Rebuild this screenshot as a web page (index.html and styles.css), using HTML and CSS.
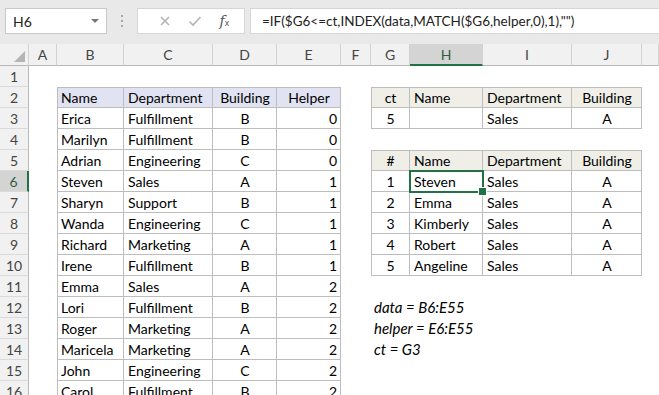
FILE: index.html
```html
<!DOCTYPE html>
<html lang="en">
<head>
  <meta charset="UTF-8">
  <title>Sheet</title>
  <link rel="stylesheet" href="styles.css">
</head>
<body>
<div class="app">
  <div class="fbar">
    <div class="namebox"><span>H6</span><span class="caret"></span></div>
    <div class="grip"><i></i><i></i><i></i></div>
    <div class="btns">
      <svg class="ico" width="12" height="12" viewBox="0 0 12 12"><path d="M2 2 L10 10 M10 2 L2 10" stroke="#b4b4b4" stroke-width="1.6" fill="none"/></svg>
      <svg class="ico" width="14" height="12" viewBox="0 0 14 12"><path d="M1.5 6.5 L5 10 L12.5 2" stroke="#b4b4b4" stroke-width="1.6" fill="none"/></svg>
      <span class="fx"><i>f</i><span>x</span></span>
    </div>
    <div class="formula">=IF($G6&lt;=ct,INDEX(data,MATCH($G6,helper,0),1),"")</div>
  </div>

  <div class="sheet">
    <div class="ch corner"></div>
    <div class="ch">A</div>
    <div class="ch">B</div>
    <div class="ch">C</div>
    <div class="ch">D</div>
    <div class="ch">E</div>
    <div class="ch">F</div>
    <div class="ch">G</div>
    <div class="ch on">H</div>
    <div class="ch">I</div>
    <div class="ch">J</div>
    <div class="ch"></div>

    <div class="rh">1</div>
    <div class="rh">2</div>
    <div class="rh">3</div>
    <div class="rh">4</div>
    <div class="rh">5</div>
    <div class="rh on">6</div>
    <div class="rh">7</div>
    <div class="rh">8</div>
    <div class="rh">9</div>
    <div class="rh">10</div>
    <div class="rh">11</div>
    <div class="rh">12</div>
    <div class="rh">13</div>
    <div class="rh">14</div>
    <div class="rh">15</div>
    <div class="rh">16</div>

    <!-- data table B2:E16 -->
    <div class="tbl data">
      <div class="hd l">Name</div><div class="hd l">Department</div><div class="hd c">Building</div><div class="hd c">Helper</div>
      <div class="l">Erica</div><div class="l">Fulfillment</div><div class="c">B</div><div class="r">0</div>
      <div class="l">Marilyn</div><div class="l">Fulfillment</div><div class="c">B</div><div class="r">0</div>
      <div class="l">Adrian</div><div class="l">Engineering</div><div class="c">C</div><div class="r">0</div>
      <div class="l">Steven</div><div class="l">Sales</div><div class="c">A</div><div class="r">1</div>
      <div class="l">Sharyn</div><div class="l">Support</div><div class="c">B</div><div class="r">1</div>
      <div class="l">Wanda</div><div class="l">Engineering</div><div class="c">C</div><div class="r">1</div>
      <div class="l">Richard</div><div class="l">Marketing</div><div class="c">A</div><div class="r">1</div>
      <div class="l">Irene</div><div class="l">Fulfillment</div><div class="c">B</div><div class="r">1</div>
      <div class="l">Emma</div><div class="l">Sales</div><div class="c">A</div><div class="r">2</div>
      <div class="l">Lori</div><div class="l">Fulfillment</div><div class="c">B</div><div class="r">2</div>
      <div class="l">Roger</div><div class="l">Marketing</div><div class="c">A</div><div class="r">2</div>
      <div class="l">Maricela</div><div class="l">Marketing</div><div class="c">A</div><div class="r">2</div>
      <div class="l">John</div><div class="l">Engineering</div><div class="c">C</div><div class="r">2</div>
      <div class="l">Carol</div><div class="l">Fulfillment</div><div class="c">B</div><div class="r">2</div>
    </div>

    <!-- criteria G2:J3 -->
    <div class="tbl crit">
      <div class="hd c">ct</div><div class="hd l">Name</div><div class="hd l">Department</div><div class="hd c">Building</div>
      <div class="c">5</div><div class="l"></div><div class="l">Sales</div><div class="c">A</div>
    </div>

    <!-- results G5:J10 -->
    <div class="tbl res">
      <div class="hd c">#</div><div class="hd l">Name</div><div class="hd l">Department</div><div class="hd c">Building</div>
      <div class="c">1</div><div class="l sel">Steven</div><div class="l">Sales</div><div class="c">A</div>
      <div class="c">2</div><div class="l">Emma</div><div class="l">Sales</div><div class="c">A</div>
      <div class="c">3</div><div class="l">Kimberly</div><div class="l">Sales</div><div class="c">A</div>
      <div class="c">4</div><div class="l">Robert</div><div class="l">Sales</div><div class="c">A</div>
      <div class="c">5</div><div class="l">Angeline</div><div class="l">Sales</div><div class="c">A</div>
    </div>

    <div class="notes">
      <div>data = B6:E55</div>
      <div>helper = E6:E55</div>
      <div>ct = G3</div>
    </div>
  </div>
</div>
</body>
</html>
```

FILE: styles.css
```css
* {
  box-sizing: border-box;
}

body {
  margin: 0;
  background: #fff;
  color: #000;
  font-family: Lato, "Open Sans", sans-serif;
  overflow: hidden;
}

.app {
  width: 659px;
  height: 395px;
  overflow: hidden;
}

/* formula bar */
.fbar {
  height: 44px;
  background: #e9e9e9;
  display: flex;
  align-items: center;
  padding: 0 0 2px 5px;
}

.namebox {
  width: 102px;
  height: 26px;
  background: #fff;
  border: 1px solid #c8c8c8;
  display: flex;
  align-items: center;
  justify-content: space-between;
  padding: 0 7px 0 7px;
  font-size: 14px;
  color: #222;
}

.caret {
  width: 0;
  height: 0;
  border-left: 4px solid transparent;
  border-right: 4px solid transparent;
  border-top: 4px solid #777;
}

.grip {
  width: 30px;
  display: flex;
  flex-direction: column;
  align-items: center;
  gap: 3px;
}

.grip i {
  width: 2px;
  height: 2px;
  background: #a8a8a8;
}

.btns {
  width: 108px;
  height: 26px;
  background: #fff;
  border: 1px solid #d6d6d6;
  display: flex;
  align-items: center;
  justify-content: space-around;
  padding: 0 6px 0 12px;
}

.fx {
  font-family: "DejaVu Serif", serif;
  font-size: 14px;
  color: #555;
}

.fx span {
  font-family: "Liberation Sans", sans-serif;
  font-size: 9px;
}

.formula {
  flex: 1;
  height: 26px;
  margin-left: 5px;
  background: #fff;
  border: 1px solid #d6d6d6;
  border-right: none;
  padding-left: 11px;
  font-size: 13.5px;
  line-height: 24px;
  color: #222;
  white-space: nowrap;
}

/* sheet grid */
.sheet {
  display: grid;
  grid-template-columns: 29px 28px 67px 89px 64px 64px 30px 39px 73px 89px 70px 1fr;
  grid-template-rows: 22px;
  grid-auto-rows: 21px;
  font-size: 14px;
}

.ch {
  background: #f1f1f1;
  border-right: 1px solid #d2d2d2;
  border-bottom: 1px solid #b8b8b8;
  text-align: center;
  line-height: 21px;
  font-size: 14px;
  color: #444;
}

.ch.on {
  background: #d4d4d4;
  border-bottom: 2px solid #217346;
  color: #2f5e40;
}

.corner {
  position: relative;
}

.corner::after {
  content: "";
  position: absolute;
  right: 3px;
  bottom: 3px;
  border-left: 11px solid transparent;
  border-bottom: 11px solid #b5b5b5;
}

.rh {
  grid-column: 1;
  background: #f1f1f1;
  border-right: 1px solid #b8b8b8;
  border-bottom: 1px solid #dadada;
  text-align: center;
  line-height: 21px;
  font-size: 14px;
  color: #444;
}

.rh.on {
  background: #d4d4d4;
  border-right: 2px solid #217346;
  color: #2f5e40;
}

/* tables */
.tbl {
  display: grid;
  grid-auto-rows: 21px;
  outline: 1px solid #bdbdbd;
  outline-offset: -1px;
}

.tbl > div {
  box-shadow: inset -1px -1px 0 #bdbdbd;
  line-height: 21px;
  white-space: nowrap;
  padding: 0 4px;
}

.tbl .hd {
  box-shadow: inset -1px -1px 0 #bdbdbd, inset 0 1px 0 #bdbdbd;
}

.data {
  grid-column: 3 / 7;
  grid-row: 3 / 18;
  grid-template-columns: 67px 89px 64px 64px;
}

.data .hd {
  background: #e1e3f2;
}

.crit {
  grid-column: 8 / 12;
  grid-row: 3 / 5;
  grid-template-columns: 39px 73px 89px 70px;
}

.res {
  grid-column: 8 / 12;
  grid-row: 6 / 12;
  grid-template-columns: 39px 73px 89px 70px;
}

.crit .hd,
.res .hd {
  background: #efefe8;
}

.l {
  text-align: left;
}

.c {
  text-align: center;
}

.r {
  text-align: right;
}

.tbl > .sel {
  position: relative;
  z-index: 1;
  box-shadow: 0 0 0 1px #217346, inset 0 0 0 1px #217346;
}

.sel::after {
  content: "";
  position: absolute;
  right: -4px;
  bottom: -4px;
  width: 7px;
  height: 7px;
  background: #217346;
  border: 1px solid #fff;
}

.notes {
  grid-column: 8 / 13;
  grid-row: 13 / 16;
  display: grid;
  grid-auto-rows: 21px;
  font-size: 15px;
  font-style: italic;
  line-height: 21px;
  padding-left: 3px;
}
```
